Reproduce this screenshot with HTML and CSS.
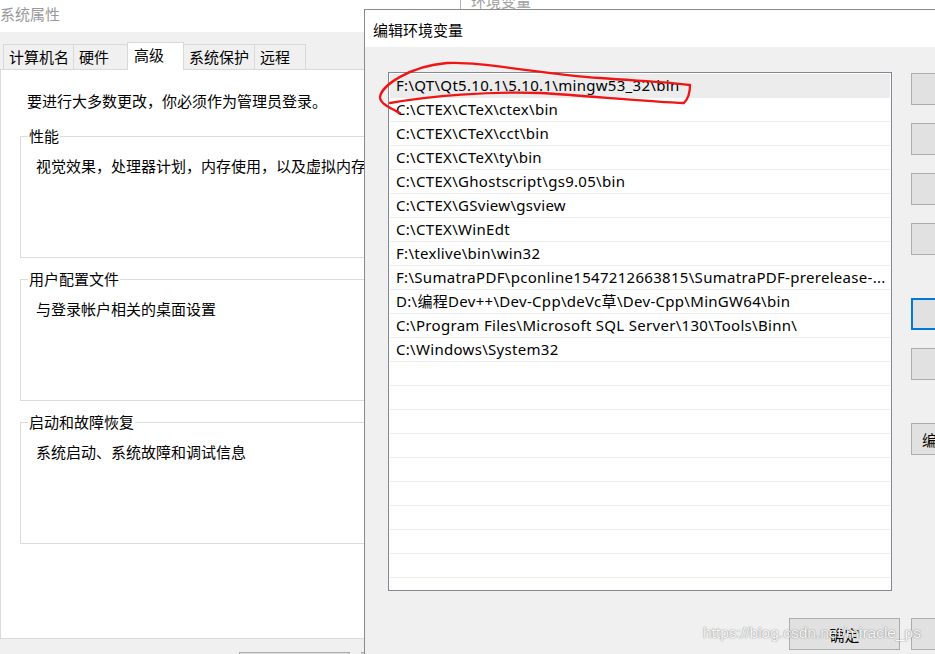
FILE: index.html
```html
<!DOCTYPE html>
<html lang="zh-CN">
<head>
<meta charset="utf-8">
<title>编辑环境变量</title>
<link rel="stylesheet" href="styles.css">
</head>
<body>
<div class="desktop">
  <section class="win sys">
    <div class="sys-title">系统属性</div>
    <div class="sys-body">
      <div class="tabs">
        <div class="tab t1">计算机名</div>
        <div class="tab t2">硬件</div>
        <div class="tab t3 active">高级</div>
        <div class="tab t4">系统保护</div>
        <div class="tab t5">远程</div>
      </div>
      <div class="panel">
        <p class="admin-note">要进行大多数更改，你必须作为管理员登录。</p>
        <fieldset class="group">
          <legend>性能</legend>
          <div class="group-body">视觉效果，处理器计划，内存使用，以及虚拟内存</div>
        </fieldset>
        <fieldset class="group">
          <legend>用户配置文件</legend>
          <div class="group-body">与登录帐户相关的桌面设置</div>
        </fieldset>
        <fieldset class="group">
          <legend>启动和故障恢复</legend>
          <div class="group-body">系统启动、系统故障和调试信息</div>
        </fieldset>
      </div>
      <div class="sys-buttons">
        <button class="btn">确定</button>
        <button class="btn">取消</button>
        <button class="btn">应用(A)</button>
      </div>
    </div>
  </section>

  <section class="win envvars">
    <div class="env-title">环境变量</div>
  </section>

  <section class="win edit-dialog">
    <div class="dlg-title">编辑环境变量</div>
    <div class="dlg-main">
      <div class="path-list">
        <div class="row selected">F:\QT\Qt5.10.1\5.10.1\mingw53_32\bin</div>
        <div class="row">C:\CTEX\CTeX\ctex\bin</div>
        <div class="row">C:\CTEX\CTeX\cct\bin</div>
        <div class="row">C:\CTEX\CTeX\ty\bin</div>
        <div class="row">C:\CTEX\Ghostscript\gs9.05\bin</div>
        <div class="row">C:\CTEX\GSview\gsview</div>
        <div class="row">C:\CTEX\WinEdt</div>
        <div class="row">F:\texlive\bin\win32</div>
        <div class="row">F:\SumatraPDF\pconline1547212663815\SumatraPDF-prerelease-...</div>
        <div class="row">D:\编程Dev++\Dev-Cpp\deVc草\Dev-Cpp\MinGW64\bin</div>
        <div class="row">C:\Program Files\Microsoft SQL Server\130\Tools\Binn\</div>
        <div class="row">C:\Windows\System32</div>
        <div class="row"></div><div class="row"></div><div class="row"></div>
        <div class="row"></div><div class="row"></div><div class="row"></div>
        <div class="row"></div><div class="row"></div><div class="row"></div>
        <div class="row"></div>
      </div>
      <div class="side-buttons">
        <button class="btn">新建(N)</button>
        <button class="btn">编辑(E)</button>
        <button class="btn">浏览(B)...</button>
        <button class="btn">删除(D)</button>
        <button class="btn focused spaced">上移(U)</button>
        <button class="btn">下移(O)</button>
        <button class="btn spaced left-text">编辑文本(T)...</button>
      </div>
    </div>
    <div class="dlg-buttons">
      <button class="btn">确定</button>
      <button class="btn">取消</button>
    </div>
  </section>

  <svg class="annotation" viewBox="0 0 935 654" width="935" height="654" aria-hidden="true">
    <path d="M 400 113 C 390 108, 381 104, 380 98 C 380 86, 410 66, 447 63 C 480 61, 540 74, 600 78 C 640 81, 670 82, 690 85 C 690 93, 688 99, 684 103 C 650 102, 590 96, 540 93 C 490 91, 430 96, 390 103" fill="none" stroke="#f01414" stroke-width="2.3" stroke-linecap="round" stroke-linejoin="round"/>
  </svg>

  <div class="watermark">https://blog.csdn.net/miracle_ps</div>
</div>
</body>
</html>
```

FILE: styles.css
```css
html, body {
  margin: 0;
  padding: 0;
  background: #ffffff;
}

.desktop {
  position: relative;
  width: 935px;
  height: 654px;
  overflow: hidden;
  font-family: "Noto Sans CJK SC", sans-serif;
  font-size: 15px;
  color: #000;
}

.btn {
  box-sizing: border-box;
  width: 111px;
  height: 32px;
  margin: 0;
  padding: 0;
  background: #e1e1e1;
  border: 1px solid #adadad;
  font-family: "Noto Sans CJK SC", sans-serif;
  font-size: 15px;
  color: #000;
  flex: none;
}

/* ---------- System properties window ---------- */
.sys {
  width: 605px;
  height: 654px;
  background: #f0f0f0;
}

.sys-title {
  height: 32px;
  line-height: 28px;
  background: #fff;
  color: #999;
  white-space: nowrap;
}

.sys-body {
  padding-top: 11px;
}

.tabs {
  display: flex;
  align-items: flex-end;
  height: 26px;
  padding-left: 3px;
}

.tab {
  box-sizing: border-box;
  height: 25px;
  line-height: 24px;
  padding-left: 5px;
  border: 1px solid #d9d9d9;
  border-bottom: 0;
  background: #f0f0f0;
  white-space: nowrap;
  margin-left: -1px;
}
.t1 { width: 71px; margin-left: 0; }
.t2 { width: 55px; }
.t3 { width: 57px; }
.t4 { width: 72px; }
.t5 { width: 52px; }

.tab.active {
  height: 28px;
  margin-bottom: -1px;
  background: #fff;
  position: relative;
  z-index: 1;
  padding-left: 6px;
}

.panel {
  box-sizing: border-box;
  height: 570px;
  background: #fff;
  border: 1px solid #d9d9d9;
  padding-top: 21px;
}

.admin-note {
  margin: 0 0 0 26px;
  line-height: 20px;
  white-space: nowrap;
}

.group {
  margin: 15px 19px 0 19px;
  padding: 0 0 0 7px;
  border: 1px solid #dcdcdc;
  min-width: 0;
}
.group + .group {
  margin-top: 11px;
}
.group legend {
  padding: 0 1px;
  line-height: 20px;
  white-space: nowrap;
}
.group-body {
  box-sizing: border-box;
  height: 111px;
  padding: 10px 0 0 8px;
  line-height: 20px;
  white-space: nowrap;
}

.sys-buttons {
  display: flex;
  justify-content: flex-end;
  gap: 11px;
  padding: 13px 11px 0 0;
}

/* ---------- Background "环境变量" window ---------- */
.envvars {
  position: absolute;
  left: 460px;
  top: -30px;
  width: 600px;
  height: 200px;
  box-sizing: border-box;
  background: #fff;
  border: 1px solid #b4b4b4;
}
.env-title {
  padding: 20px 0 0 10px;
  line-height: 20px;
  color: #a0a0a0;
}

/* ---------- Edit environment variable dialog ---------- */
.edit-dialog {
  position: absolute;
  left: 364px;
  top: 9px;
  width: 682px;
  height: 700px;
  box-sizing: border-box;
  background: #f0f0f0;
  border: 1px solid #8a8a8a;
}

.dlg-title {
  box-sizing: border-box;
  height: 37px;
  padding: 2px 0 0 8px;
  line-height: 35px;
  background: #fff;
}

.dlg-main {
  display: flex;
  gap: 19px;
  padding: 25px 23px 0 23px;
}

.path-list {
  box-sizing: border-box;
  width: 504px;
  height: 519px;
  padding: 1px 1px 0 1px;
  background: #fff;
  border: 1px solid #828790;
  overflow: hidden;
  flex: none;
  font-family: "Noto Sans", "Noto Sans CJK SC", sans-serif;
  font-size: 15px;
  letter-spacing: 0.3px;
}

.row {
  box-sizing: border-box;
  height: 24px;
  line-height: 23px;
  padding-left: 6px;
  border-bottom: 1px solid #ececec;
  white-space: nowrap;
  overflow: hidden;
}
.row.selected {
  background: #ececec;
}

.side-buttons {
  display: flex;
  flex-direction: column;
  gap: 18px;
  padding-top: 1px;
}
.side-buttons .spaced {
  margin-top: 25px;
}
.btn.focused {
  border: 2px solid #0078d7;
}
.btn.left-text {
  text-align: left;
  padding-left: 10px;
  white-space: nowrap;
}

.dlg-buttons {
  display: flex;
  justify-content: flex-end;
  gap: 11px;
  padding: 27px 23px 0 0;
}

/* ---------- Overlays ---------- */
.annotation {
  position: absolute;
  left: 0;
  top: 0;
  pointer-events: none;
}

.watermark {
  position: absolute;
  left: 703px;
  top: 623px;
  font-family: "Liberation Sans", sans-serif;
  font-size: 15.5px;
  line-height: 20px;
  color: rgba(255, 255, 255, 0.95);
  text-shadow: 0 0 1px rgba(60, 60, 60, 0.55), 0 0 2px rgba(90, 90, 90, 0.35);
  white-space: nowrap;
  pointer-events: none;
}
```
